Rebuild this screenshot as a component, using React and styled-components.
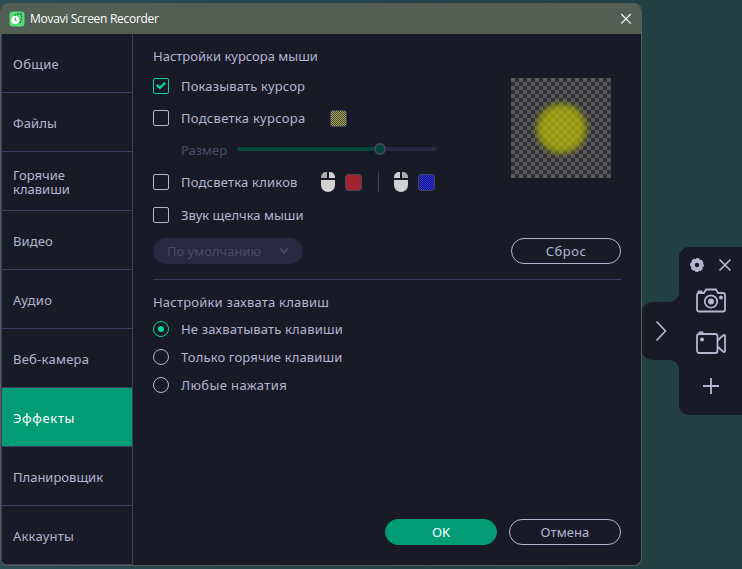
import React from "react";
import styled, { createGlobalStyle } from "styled-components";

const ink = "#b3b6d0";
const panel = "#191a27";
const line = "#3c3e61";
const mint = "#05d59c";

const GlobalStyle = createGlobalStyle`
  *, *::before, *::after { box-sizing: border-box; }
  body { margin: 0; }
`;

const Desktop = styled.div`
  position: relative;
  width: 742px;
  height: 569px;
  overflow: hidden;
  padding-top: 3px;
  background: linear-gradient(90deg, #2b4d54 0, #234044 560px, #223f43 742px);
  font: 13px/14px "Noto Sans", sans-serif;
  color: ${ink};
`;

const Window = styled.section`
  display: flex;
  flex-direction: column;
  width: 642px;
  height: 563px;
  border-radius: 8px;
  overflow: hidden;
  border: 1px solid #535e54;
  border-top: 0;
  background: ${panel};
`;

const TitleBar = styled.header`
  display: flex;
  align-items: center;
  flex: 0 0 31px;
  padding: 0 9px 0 8px;
  background: #535e54;
  color: #fff;
  font: 12px/16px "Open Sans", "Noto Sans", sans-serif;
`;

const Title = styled.h1`
  flex: 1;
  margin: 0 0 0 5px;
  font: inherit;
  letter-spacing: -0.29px;
`;

const Body = styled.div`
  display: flex;
  flex: 1;
  min-height: 0;
`;

const Sidebar = styled.nav`
  flex: 0 0 132px;
  width: 132px;
  border: solid ${line};
  border-width: 0 1px;
`;

const NavItem = styled.div`
  display: flex;
  align-items: center;
  height: 59px;
  padding: 2px 30px 0 11px;
  border-bottom: 1px solid ${line};
  background: ${(p) => (p.$active ? "#029b75" : "transparent")};
  color: ${(p) => (p.$active ? "#fff" : ink)};
  letter-spacing: ${(p) => p.$spacing || "0"};
`;

const Content = styled.main`
  display: flex;
  flex-direction: column;
  flex: 1;
  padding: 13px 20px 20px;
`;

const Columns = styled.div`
  display: flex;
  justify-content: space-between;
  height: 233px;
  border-bottom: 1px solid ${line};
`;

const Aside = styled.div`
  display: flex;
  flex-direction: column;
  justify-content: space-between;
  padding: 31px 0 15px;
`;

const SectionTitle = styled.h2`
  margin: 0;
  padding-top: ${(p) => p.$top}px;
  height: 20px;
  font: 13px/16px "Noto Sans", sans-serif;
  letter-spacing: ${(p) => p.$spacing || "0"};
`;

const Option = styled.div`
  display: flex;
  align-items: center;
  height: ${(p) => p.$height || 32}px;
`;

const Label = styled.span`
  width: ${(p) => (p.$width ? p.$width + "px" : "auto")};
  margin-left: ${(p) => (p.$indent ? 28 : 12)}px;
  letter-spacing: ${(p) => p.$spacing || "0"};
  color: ${(p) => (p.$dim ? "#4a4c67" : ink)};
  white-space: nowrap;
`;

const Box = styled.span`
  display: flex;
  width: 16px;
  height: 16px;
  border: 1px solid ${(p) => (p.$on ? mint : ink)};
  border-radius: 2px;
`;

const Radio = styled.span`
  display: grid;
  place-items: center;
  width: 16px;
  height: 16px;
  border: 1px solid ${(p) => (p.$on ? mint : ink)};
  border-radius: 50%;
  &::after {
    content: "";
    width: 6px;
    height: 6px;
    border-radius: 50%;
    background: ${(p) => (p.$on ? mint : "transparent")};
  }
`;

const Swatch = styled.span`
  width: 17px;
  height: 17px;
  margin-left: ${(p) => p.$gap}px;
  border: 1px solid #42455c;
  border-radius: 3px;
  background: repeating-conic-gradient(${(p) => p.$color} 0 25%, #42455c 0 50%) 0 0 / 2px 2px;
`;

const Mouse = styled.span`
  display: grid;
  grid-template: 6px 13px / 6px 6px;
  gap: 1px 2px;
  width: 14px;
  height: 20px;
  margin-left: ${(p) => p.$gap}px;
  border-radius: 5px 5px 7px 7px;
  overflow: hidden;
  i { background: #d2d2d2; }
  i:nth-child(${(p) => p.$button}) { background: #aaa; }
  i:last-child { grid-column: span 2; margin-top: 1px; }
`;

const Divider = styled.span`
  width: 1px;
  height: 20px;
  margin-left: 16px;
  background: ${line};
`;

const Slider = styled.div`
  display: flex;
  align-items: center;
  width: 200px;
  height: 4px;
  margin: -2px 0 0 10px;
  border-radius: 2px;
  background: #282941;
`;

const SliderFill = styled.span`
  width: 138px;
  height: 4px;
  border-radius: 2px 0 0 2px;
  background: #03463b;
`;

const Knob = styled.span`
  width: 12px;
  height: 12px;
  margin-left: -1px;
  border: 2px solid #42455c;
  border-radius: 50%;
  background: #03463b;
`;

const Select = styled.div`
  display: flex;
  align-items: center;
  justify-content: space-between;
  width: 150px;
  height: 26px;
  margin-top: 3px;
  padding: 0 14px 1px;
  border-radius: 13px;
  background: #282941;
  color: #4a4c67;
`;

const Preview = styled.div`
  width: 100px;
  height: 100px;
  background:
    radial-gradient(circle at 50.5px 50.5px, rgba(192, 196, 0, 0.7) 0, rgba(192, 196, 0, 0.68) 18px, rgba(182, 186, 0, 0.58) 22px, rgba(165, 170, 0, 0.28) 26px, transparent 30px),
    repeating-conic-gradient(#303034 0 25%, #585858 0 50%) 0 0 / 8px 8px;
`;

const Button = styled.button`
  display: flex;
  align-items: center;
  justify-content: center;
  width: ${(p) => p.$width}px;
  height: 26px;
  padding: 0;
  border: 1px solid ${(p) => (p.$primary ? "#029b75" : ink)};
  border-radius: 13px;
  background: ${(p) => (p.$primary ? "#029b75" : "transparent")};
  color: ${(p) => (p.$primary ? "#fff" : ink)};
  font: inherit;
  letter-spacing: ${(p) => p.$spacing || "0"};
`;

const Footer = styled.footer`
  display: flex;
  justify-content: flex-end;
  gap: 12px;
  margin-top: auto;
`;

const KeySection = styled.div`
  padding-top: 13px;
`;

/* Floating recorder widget docked over the right edge of the desktop */
const Widget = styled.aside`
  position: absolute;
  top: 247px;
  right: 0;
  display: flex;
  align-items: center;
`;

const Handle = styled.div`
  display: grid;
  place-items: center;
  position: relative;
  width: 37px;
  height: 58px;
  border-radius: 10px 0 0 10px;
  background: ${panel};
  &::before, &::after {
    content: "";
    position: absolute;
    right: 0;
    width: 10px;
    height: 10px;
  }
  &::before {
    top: -10px;
    background: radial-gradient(circle at 0 0, transparent 9.5px, ${panel} 10.5px);
  }
  &::after {
    bottom: -10px;
    background: radial-gradient(circle at 0 100%, transparent 9.5px, ${panel} 10.5px);
  }
`;

const Tools = styled.div`
  display: flex;
  flex-direction: column;
  align-items: center;
  width: 63px;
  height: 168px;
  padding-top: 10px;
  border-radius: 10px 0 0 10px;
  background: ${panel};
`;

const ToolHead = styled.div`
  display: flex;
  gap: 13px;
  height: 31px;
`;

const Icon = styled.svg`
  display: block;
  flex: none;
  fill: none;
  stroke: ${(p) => p.$color || ink};
  stroke-width: ${(p) => p.$weight || 2};
  margin-top: ${(p) => p.$top || 0}px;
`;

const nav = [
  { text: "Общие", spacing: "0.3px" },
  { text: "Файлы", spacing: "0.1px" },
  { text: "Горячие клавиши" },
  { text: "Видео", spacing: "0.1px" },
  { text: "Аудио", spacing: "0.3px" },
  { text: "Веб-камера", spacing: "0.25px" },
  { text: "Эффекты", spacing: "0.65px", active: true },
  { text: "Планировщик" },
  { text: "Аккаунты", spacing: "0.2px" },
];

const captureModes = [
  { text: "Не захватывать клавиши", spacing: "0.17px", height: 32, on: true },
  { text: "Только горячие клавиши", spacing: "0.13px", height: 24 },
  { text: "Любые нажатия", spacing: "0.4px", height: 32 },
];

function MouseIcon({ gap, button }) {
  return <Mouse $gap={gap} $button={button}><i /><i /><i /></Mouse>;
}

function AppLogo() {
  return (
    <svg width="16" height="16" viewBox="0 0 16 16">
      <rect x=".5" y=".5" width="15" height="15" rx="3" fill="#55dd78" />
      <path d="M5.500 4.500 7 3h5.500v3.500L11.500 11l-2 1.500" fill="none" stroke="#247747" strokeWidth="1.3" strokeDasharray="2 1" />
      <circle cx="6.300" cy="9" r="4.100" fill="#fff" />
      <path d="M6.300 6.500v2.700h1.700" fill="none" stroke="#36ad5c" strokeWidth="1.1" />
    </svg>
  );
}

function Check() {
  return (
    <Icon width="14" height="14" viewBox="0 0 14 14" $color={mint} $weight={2.3}>
      <path d="m2.600 5.700 3.200 3.200 5.300-5.200" />
    </Icon>
  );
}

function RecorderWidget() {
  return (
    <Widget>
      <Handle>
        <Icon width="12" height="22" viewBox="0 0 12 22" $weight={1.7}>
          <path d="m1.500 1.500 9 9.500-9 9.500" />
        </Icon>
      </Handle>
      <Tools>
        <ToolHead>
          <Icon width="16" height="16" viewBox="0 0 16 16" $weight={4}>
            <circle cx="8" cy="8" r="4.200" />
            <circle cx="8" cy="8" r="6.200" strokeWidth="1.4" strokeDasharray="3.400 1.470" strokeDashoffset="1.700" />
          </Icon>
          <Icon width="14" height="16" viewBox="0 0 14 16" $weight={1.7}>
            <path d="m1.500 2.500 11 11m0-11-11 11" />
          </Icon>
        </ToolHead>
        <Icon width="30" height="25" viewBox="0 0 30 25" $weight={1.8}>
          <path d="M3 5h5l2-3.500h10L22 5h5a2 2 0 0 1 2 2v14.500a2 2 0 0 1-2 2H3a2 2 0 0 1-2-2V7a2 2 0 0 1 2-2Z" />
          <path d="M2.500 5V3.400h3V5" fill={ink} />
          <circle cx="15" cy="13.500" r="6.200" />
          <circle cx="15" cy="13.500" r="3" fill={ink} stroke="none" />
          <circle cx="25" cy="9.500" r="2" fill={ink} stroke="none" />
        </Icon>
        <Icon width="30" height="23" viewBox="0 0 30 23" $weight={1.8} $top={18}>
          <rect x="1" y="3" width="20.500" height="19" rx="2.300" />
          <path d="M3.500 2.500V1.400h3v1.100" fill={ink} />
          <path d="M21.500 9.500 27 4.500q2-1.500 2 .5v15q0 2-2 .5l-5.500-5" />
          <circle cx="6" cy="8.500" r="2" fill={ink} stroke="none" />
        </Icon>
        <Icon width="16" height="16" viewBox="0 0 16 16" $weight={1.8} $top={24}>
          <path d="M8 0v16M0 8h16" />
        </Icon>
      </Tools>
    </Widget>
  );
}

export default function App() {
  return (
    <Desktop>
      <GlobalStyle />
      <Window>
        <TitleBar>
          <AppLogo />
          <Title>Movavi Screen Recorder</Title>
          <Icon width="12" height="12" viewBox="0 0 12 12" $color="#fff" $weight={1.1}>
            <path d="m1.200 1 9.600 9.600m0-9.600-9.600 9.600" />
          </Icon>
        </TitleBar>
        <Body>
          <Sidebar>
            {nav.map((item) => (
              <NavItem key={item.text} $active={item.active} $spacing={item.spacing}>{item.text}</NavItem>
            ))}
          </Sidebar>
          <Content>
            <Columns>
              <div>
                <SectionTitle $top={1}>Настройки курсора мыши</SectionTitle>
                <Option $height={38}>
                  <Box $on><Check /></Box>
                  <Label $spacing="0.15px">Показывать курсор</Label>
                </Option>
                <Option $height={26}>
                  <Box />
                  <Label $width={149} $spacing="0.28px">Подсветка курсора</Label>
                  <Swatch $gap={0} $color="#a8ab2c" />
                </Option>
                <Option $height={38}>
                  <Label $indent $dim>Размер</Label>
                  <Slider><SliderFill /><Knob /></Slider>
                </Option>
                <Option $height={26}>
                  <Box />
                  <Label $width={140} $spacing="0.2px">Подсветка кликов</Label>
                  <MouseIcon gap={0} button={1} />
                  <Swatch $gap={10} $color="#ff0000" />
                  <Divider />
                  <MouseIcon gap={15} button={2} />
                  <Swatch $gap={10} $color="#0000ff" />
                </Option>
                <Option $height={40}>
                  <Box />
                  <Label>Звук щелчка мыши</Label>
                </Option>
                <Select>
                  По умолчанию
                  <Icon width="10" height="8" viewBox="0 0 10 8" $color="#4a4c67">
                    <path d="m1 1 4 5 4-5" />
                  </Icon>
                </Select>
              </div>
              <Aside>
                <Preview />
                <Button $width={110} $spacing="0.5px">Сброс</Button>
              </Aside>
            </Columns>
            <KeySection>
              <SectionTitle $top={1} $spacing="0.2px">Настройки захвата клавиш</SectionTitle>
              {captureModes.map((mode) => (
                <Option key={mode.text} $height={mode.height}>
                  <Radio $on={mode.on} />
                  <Label $spacing={mode.spacing}>{mode.text}</Label>
                </Option>
              ))}
            </KeySection>
            <Footer>
              <Button $primary $width={112}>OK</Button>
              <Button $width={112} $spacing="0.1px">Отмена</Button>
            </Footer>
          </Content>
        </Body>
      </Window>
      <RecorderWidget />
    </Desktop>
  );
}
